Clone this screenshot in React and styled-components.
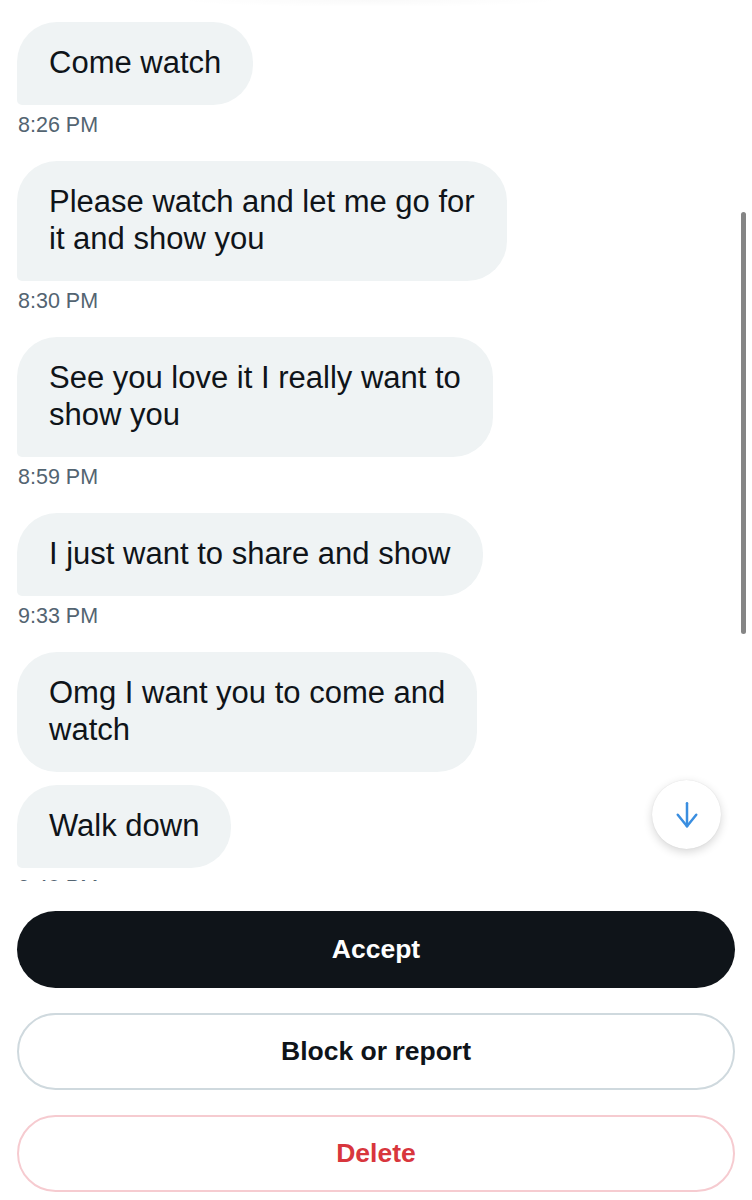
import React from 'react';
import styled, { createGlobalStyle } from "styled-components";

const GlobalStyle = createGlobalStyle`
  html, body {
    margin: 0;
    padding: 0;
    background: #ffffff;
  }
  body {
    font-family: "Liberation Sans", Arial, sans-serif;
    -webkit-font-smoothing: antialiased;
  }
`

const Screen = styled.div`
  width: 752px;
  height: 1200px;
  display: flex;
  flex-direction: column;
  background: #ffffff;
  overflow: hidden;
`

const Conversation = styled.div`
  position: relative;
  height: 881px;
  flex-shrink: 0;
  overflow: hidden;
`

const TopShade = styled.div`
  position: absolute;
  top: 0;
  left: 170px;
  width: 400px;
  height: 7px;
  background: radial-gradient(ellipse at top, rgba(0, 0, 0, 0.025), rgba(0, 0, 0, 0) 70%);
`

const MessageList = styled.div`
  display: flex;
  flex-direction: column;
  align-items: flex-start;
  padding: 22px 17px 0;
`

const Message = styled.div`
  display: flex;
  flex-direction: column;
  align-items: flex-start;
  margin-bottom: ${(props) => props.grouped ? "13px" : "23px"};
`

const Bubble = styled.div`
  width: fit-content;
  box-sizing: border-box;
  background-color: #eff3f4;
  color: #0f1419;
  font-size: 31px;
  line-height: 37px;
  padding: 22px 32px 24px;
  white-space: pre-line;
  border-radius: ${(props) => props.tail ? "40px 40px 40px 5px" : "40px"};
`

const Time = styled.div`
  margin-top: 7px;
  margin-left: 1px;
  font-size: 21.5px;
  line-height: 26px;
  color: #536471;
`

const ScrollThumb = styled.div`
  position: absolute;
  top: 212px;
  right: 6px;
  width: 5px;
  height: 422px;
  border-radius: 3px;
  background: #858585;
`

const JumpButton = styled.div`
  position: absolute;
  right: 31px;
  bottom: 32px;
  width: 69px;
  height: 69px;
  border-radius: 50%;
  background: #ffffff;
  box-shadow: 0 3px 10px rgba(0, 0, 0, 0.16), 0 0 1px rgba(0, 0, 0, 0.12);
  display: flex;
  align-items: center;
  justify-content: center;
`

const Actions = styled.div`
  display: flex;
  flex-direction: column;
  gap: 25px;
  padding: 30px 17px 0;
`

const ActionButton = styled.div`
  height: 77px;
  box-sizing: border-box;
  border-radius: 39px;
  display: flex;
  align-items: center;
  justify-content: center;
  font-size: 26.5px;
  font-weight: 700;
  background: ${(props) => props.primary ? "#0f1419" : "#ffffff"};
  color: ${(props) => props.primary ? "#ffffff" : props.danger ? "#d8363d" : "#0f1419"};
  border: ${(props) => props.primary ? "none" : props.danger ? "2px solid #f6cbd0" : "2px solid #cfd9de"};
`

const messages = [
  { text: "Come watch", time: "8:26 PM" },
  { text: "Please watch and let me go for\nit and show you", time: "8:30 PM" },
  { text: "See you love it I really want to\nshow you", time: "8:59 PM" },
  { text: "I just want to share and show", time: "9:33 PM" },
  { text: "Omg I want you to come and\nwatch" },
  { text: "Walk down", time: "9:40 PM" },
]

function ArrowDown() {
  return (
    <svg width="30" height="30" viewBox="0 0 24 24" fill="none" stroke="#3a8ee0" strokeWidth="2" strokeLinecap="round" strokeLinejoin="round">
      <path d="M12 2.5v18.5" />
      <path d="M4.6 11.8L12 21l7.4-9.2" />
    </svg>
  )
}

function App() {
  return (
    <Screen>
      <GlobalStyle />
      <Conversation>
        <TopShade />
        <MessageList>
          {messages.map((m, i) => (
            <Message key={i} grouped={!m.time}>
              <Bubble tail={!!m.time}>{m.text}</Bubble>
              {m.time && <Time>{m.time}</Time>}
            </Message>
          ))}
        </MessageList>
        <ScrollThumb />
        <JumpButton>
          <ArrowDown />
        </JumpButton>
      </Conversation>
      <Actions>
        <ActionButton primary>Accept</ActionButton>
        <ActionButton>Block or report</ActionButton>
        <ActionButton danger>Delete</ActionButton>
      </Actions>
    </Screen>
  );
}

export default App;
